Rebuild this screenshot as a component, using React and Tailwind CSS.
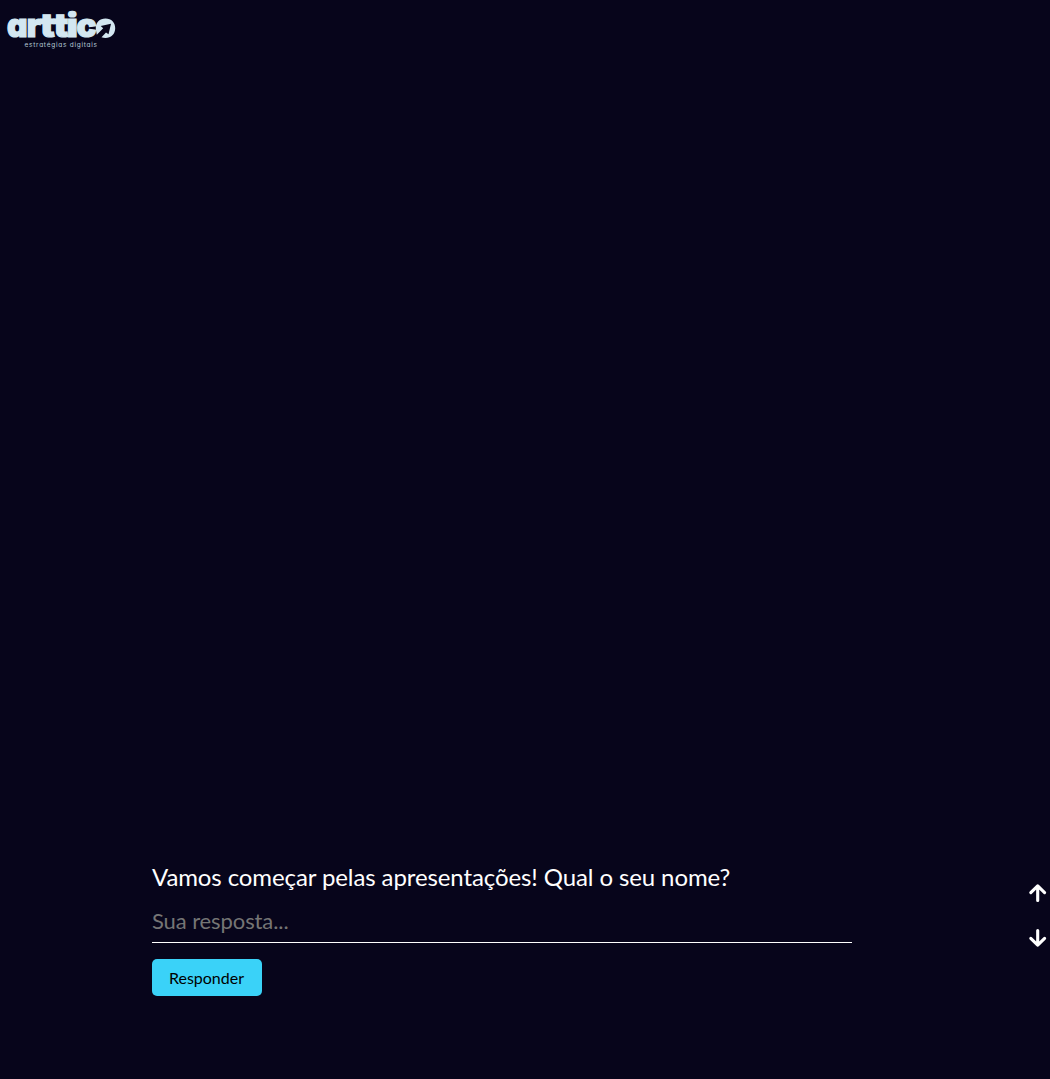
function Logo() {
  return (
    <svg className="block h-12 w-[124px]" viewBox="0 0 124 48" role="img" aria-label="arttico">
      <g fill="#d3e7f1" stroke="#d3e7f1" strokeWidth="1.2" strokeLinejoin="miter" className="font-['Inter'] font-black [font-feature-settings:'cv11']" fontSize="32">
        <text x="6.9" y="33.3" textLength="20.5" lengthAdjust="spacingAndGlyphs">a</text>
        <text x="26.8" y="33.3" textLength="14" lengthAdjust="spacingAndGlyphs">r</text>
        <text x="40.2" y="33.3" textLength="14.5" lengthAdjust="spacingAndGlyphs">t</text>
        <text x="53.7" y="33.3" textLength="14.5" lengthAdjust="spacingAndGlyphs">t</text>
        <text x="66.8" y="33.3" textLength="11" lengthAdjust="spacingAndGlyphs">i</text>
        <text x="76.5" y="33.3" textLength="20" lengthAdjust="spacingAndGlyphs">c</text>
      </g>
      <path fill="#d3e7f1" d="M95.8 25C95.5 18.5 99.7 14.6 105.5 14.6C111.5 14.6 115.2 18.8 115.2 24.2C115.2 30 111 34 105.5 34C104 34 102.8 33.8 101.5 33.2L106 28.5L108.5 30.2L111 19.8L100.7 22L103.2 24.2L96.8 30.7Z" />
      <text x="24.5" y="42.8" textLength="72.5" fill="#d3e7f1" opacity=".85" className="font-['Inter'] [font-feature-settings:'cv11']" fontSize="6.5">estratégias digitais</text>
    </svg>
  );
}

function Arrow({ down = false }) {
  return (
    <svg className={down ? "h-5 w-5 -scale-y-100" : "h-5 w-5"} viewBox="0 0 20 20" fill="none" stroke="white" strokeWidth="3.1" strokeLinecap="round" strokeLinejoin="round" aria-hidden="true">
      <path d="M9.7 17.4V3M2.8 9.7L9.7 2.8L16.6 9.7" />
    </svg>
  );
}

export default function App() {
  return (
    <main className="relative flex h-[1079px] w-full flex-col justify-between bg-[#07051b] font-['Lato',sans-serif] text-white">
      <header className="pt-1">
        <Logo />
      </header>
      <form className="mb-[83px] ml-[152px] w-[700px]" onSubmit={(e) => e.preventDefault()}>
        <label htmlFor="name" className="block text-2xl leading-9 tracking-[-0.1px]">Vamos começar pelas apresentações! Qual o seu nome?</label>
        <input id="name" placeholder="Sua resposta..." className="block h-12 w-full border-b border-white bg-transparent pt-[3px] text-[22px] tracking-[-0.1px] outline-none placeholder:text-[#757575]" />
        <button className="mt-4 block h-[37px] w-[110px] rounded-[5px] bg-[#3ad2f8] pr-px text-base text-black">Responder</button>
      </form>
      <nav className="absolute right-[2px] top-[883px] flex flex-col gap-[25px]">
        <button aria-label="Anterior"><Arrow /></button>
        <button aria-label="Próxima"><Arrow down /></button>
      </nav>
    </main>
  );
}
